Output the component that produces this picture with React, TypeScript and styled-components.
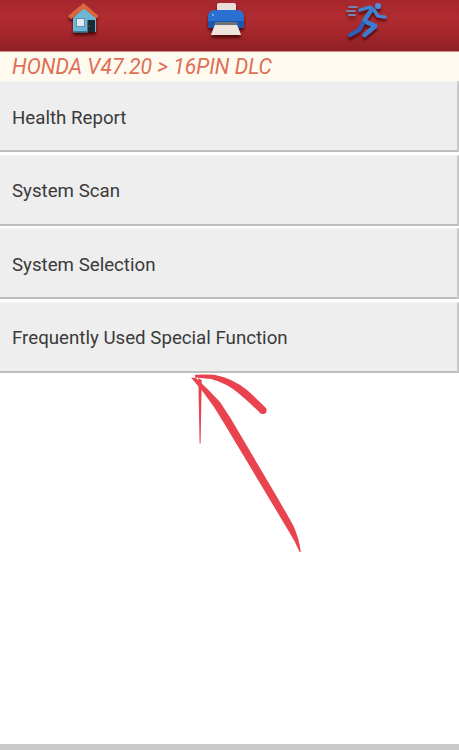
import React from "react";
import styled, { createGlobalStyle } from "styled-components";

const Global = createGlobalStyle`
  html, body { margin: 0; padding: 0; background: #fff; }
  body { font-family: Roboto, "Liberation Sans", sans-serif; }
`;

const Page = styled.div`
  position: relative;
  width: 459px;
  height: 750px;
  display: flex;
  flex-direction: column;
  overflow: hidden;
  background: #fff;
`;

const Header = styled.header`
  height: 51px;
  flex: none;
  display: flex;
  gap: 90px;
  padding-left: 60px;
  background: linear-gradient(180deg, #a5272d 0%, #b02c31 35%, #a5272c 65%, #8d2024 100%);
  border-bottom: 1px solid #d98a7f;
`;

const IconCell = styled.div`
  display: flex;
  align-items: flex-start;
`;

const IconSvg = styled.svg`
  width: 50px;
  height: 45px;
  display: block;
`;

const Crumb = styled.div`
  height: 29px;
  flex: none;
  background: #fffaf0;
  color: #de6f55;
  font-style: italic;
  font-size: 21.2px;
  line-height: 29px;
  padding-left: 12px;
  white-space: nowrap;
`;

const List = styled.div`
  display: flex;
  flex-direction: column;
  gap: 2.67px;
`;

const Row = styled.div`
  height: 71px;
  box-sizing: border-box;
  display: flex;
  align-items: center;
  padding-left: 12px;
  padding-top: 3px;
  background: #eeeeee;
  border-bottom: 2px solid #bdbdbd;
  border-right: 2px solid #c9c9c9;
  border-top: 1px solid #f4f4f4;
  color: #3a3a3a;
  font-size: 18.7px;
`;

const Arrow = styled.svg`
  position: absolute;
  left: 0;
  top: 0;
  width: 459px;
  height: 750px;
  pointer-events: none;
`;

const BottomBar = styled.div`
  position: absolute;
  left: 0;
  right: 0;
  bottom: 0;
  height: 6px;
  background: #c9c9c9;
`;

const Shadow = () => (
  <defs>
    <filter id="iconShadow" x="-20%" y="-20%" width="140%" height="150%">
      <feDropShadow dx="0" dy="3" stdDeviation="1.6" floodColor="#300" floodOpacity="0.75" />
    </filter>
  </defs>
);

const HomeIcon = () => (
  <IconSvg viewBox="0 0 50 45">
    <g filter="url(#iconShadow)">
      <path d="M13 18 L24 8 L36 18 V32 H13Z" fill="#6cb6d8" />
      <path d="M8 16 L23.5 3 L38.5 16 L36 18.5 L24 8.5 L11 19 Z" fill="#d9683c" />
      <rect x="16" y="18" width="9" height="9" fill="#5a93b0" />
      <rect x="17" y="19" width="7" height="7" fill="#dfe9ee" />
      <rect x="27.5" y="20" width="7.5" height="12" fill="#1e2a33" />
      <circle cx="29" cy="26" r="0.6" fill="#c46a3a" />
      <rect x="13" y="31" width="14.5" height="1.5" fill="#3e7a99" />
    </g>
  </IconSvg>
);

const PrinterIcon = () => (
  <IconSvg viewBox="0 0 50 45">
    <g filter="url(#iconShadow)">
      <path d="M17 5 Q17 3 19 3 H34 Q36 3 36 5 V12 H17Z" fill="#eadfd8" />
      <path d="M8 17 Q8 10 15 10 H37 Q44 10 44 17 V25 Q44 28 41 28 H11 Q8 28 8 25Z" fill="#2a6fd0" />
      <path d="M8 21 H44 V25 Q44 28 41 28 H11 Q8 28 8 25Z" fill="#1f58ad" />
      <circle cx="13" cy="15" r="1" fill="#8db8ee" />
      <path d="M16 22 H36 L41 35 H11Z" fill="#efe4dc" />
      <path d="M16 22 H36 L37 25 H15Z" fill="#2a2f40" opacity="0.65" />
    </g>
  </IconSvg>
);

const RunnerIcon = () => (
  <IconSvg viewBox="0 0 50 45">
    <g filter="url(#iconShadow)">
      <circle cx="38" cy="6" r="3" fill="#4a90dc" />
      <path d="M20 10 L30 7 L34 10 L38 16 L45 17" fill="none" stroke="#3f86d8" strokeWidth="3.2" strokeLinejoin="round" strokeLinecap="round" />
      <path d="M32 9 L24 21 L35.5 26 L24.5 35" fill="none" stroke="#3a7ccf" strokeWidth="4.2" strokeLinejoin="round" strokeLinecap="round" />
      <path d="M23 23 L19 30 L10 35" fill="none" stroke="#2a5fbc" strokeWidth="4" strokeLinejoin="round" strokeLinecap="round" />
      <path d="M9 7 H17 M7 11 H15 M9 15 H15" fill="none" stroke="#6d9ed6" strokeWidth="1.7" strokeLinecap="round" />
    </g>
  </IconSvg>
);

const rows = ["Health Report", "System Scan", "System Selection", "Frequently Used Special Function"];

export default function App() {
  return (
    <Page>
      <Global />
      <svg width="0" height="0" style={{ position: "absolute" }}><Shadow /></svg>
      <Header>
        <IconCell><HomeIcon /></IconCell>
        <IconCell><PrinterIcon /></IconCell>
        <IconCell><RunnerIcon /></IconCell>
      </Header>
      <Crumb>HONDA V47.20 &gt; 16PIN DLC</Crumb>
      <List>
        {rows.map((r) => <Row key={r}>{r}</Row>)}
      </List>
      <Arrow viewBox="0 0 459 750">
        <path d="M191 377.5 L196 378 Q209 390 220 402 Q231 418 240.5 435 L273.5 491 Q287 514 293.5 526 Q299 538 300.8 552 L299.6 552 Q295 541 288 530 L267 495 L233.5 439 Q224 423 214 407 Q203 391 191 377.5Z" fill="#e8434f" />
        <path d="M195 374.8 Q205 374 214 374.8 Q232 378 247 390 Q257 399 266 408 Q268 412 264 414 Q261 414.5 259.5 412.5 Q250 403 240 394.5 Q227 383 211 379 Q203 378 195 377.5 Z" fill="#e8434f" />
        <path d="M198.3 378 L201.7 380 L200.6 443.5 L199.6 443.5 Z" fill="#e8434f" />
      </Arrow>
      <BottomBar />
    </Page>
  );
}
